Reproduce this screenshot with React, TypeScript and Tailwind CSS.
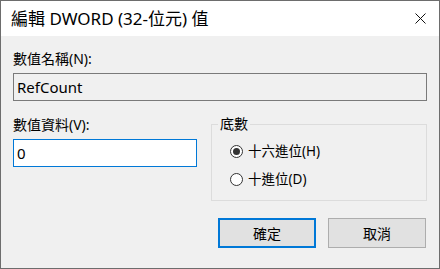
import { useState } from 'react';

const font = 'font-["Noto_Sans","Noto_Sans_CJK_TC",sans-serif]';

const Radio = ({ checked, label, onClick }: { checked: boolean; label: string; onClick: () => void }) => (
  <button type="button" onClick={onClick} className="flex items-center gap-[5px] h-[16px] text-[13.5px] leading-[16px] text-black">
    <span className="w-[13px] h-[13px] rounded-full border border-[#333333] bg-white flex items-center justify-center flex-shrink-0">
      {checked && <span className="w-[7px] h-[7px] rounded-full bg-[#333333]" />}
    </span>
    <span>{label}</span>
  </button>
);

export default function App() {
  const [hex, setHex] = useState(true);
  const [value, setValue] = useState('0');

  return (
    <div className={`w-[440px] h-[269px] border border-[#6d6d6d] bg-[#f0f0f0] flex flex-col ${font}`}>
      {/* Title bar */}
      <div className="h-[35px] bg-white flex items-center justify-between pl-[10px] pr-[13px] flex-shrink-0">
        <span className="text-[17px] leading-[20px] text-black">編輯 DWORD (32-位元) 值</span>
        <button type="button" className="w-[12px] h-[12px] flex items-center justify-center">
          <svg width="11" height="11" viewBox="0 0 11 11" fill="none" stroke="#111" strokeWidth="1">
            <path d="M0.5 0.5 L10.5 10.5 M10.5 0.5 L0.5 10.5" />
          </svg>
        </button>
      </div>

      {/* Body */}
      <div className="flex-1 px-[12px] pt-[15px] flex flex-col">
        <label className="text-[14px] leading-[16px] text-black">數值名稱(N):</label>
        <div className="mt-[6px] h-[28px] border border-[#7a7a7a] bg-[#f0f0f0] flex items-center px-[3px] text-[15px] text-black">
          RefCount
        </div>

        <div className="mt-[16px] grid grid-cols-[184px_216px] gap-x-[14px]">
          <div className="flex flex-col">
            <label className="text-[14px] leading-[16px] text-black">數值資料(V):</label>
            <input
              value={value}
              onChange={(e) => setValue(e.target.value)}
              className="mt-[6px] h-[28px] border border-[#0078d7] bg-white px-[3px] text-[15px] text-black outline-none"
            />
          </div>

          <fieldset className="border border-[#dcdcdc] h-[85px] pl-[6px] -mt-[1px]">
            <legend className="px-[2px] text-[14px] leading-[16px] text-black">底數</legend>
            <div className="flex flex-col gap-[12px] pl-[12px] pt-[11px]">
              <Radio checked={hex} label="十六進位(H)" onClick={() => setHex(true)} />
              <Radio checked={!hex} label="十進位(D)" onClick={() => setHex(false)} />
            </div>
          </fieldset>
        </div>

        {/* Buttons */}
        <div className="mt-[17px] flex justify-end gap-[12px] pr-[1px]">
          <button type="button" className="w-[98px] h-[30px] border-2 border-[#0078d7] bg-[#e1e1e1] text-[14px] text-black">
            確定
          </button>
          <button type="button" className="w-[98px] h-[30px] border border-[#adadad] bg-[#e1e1e1] text-[14px] text-black">
            取消
          </button>
        </div>
      </div>
    </div>
  );
}
